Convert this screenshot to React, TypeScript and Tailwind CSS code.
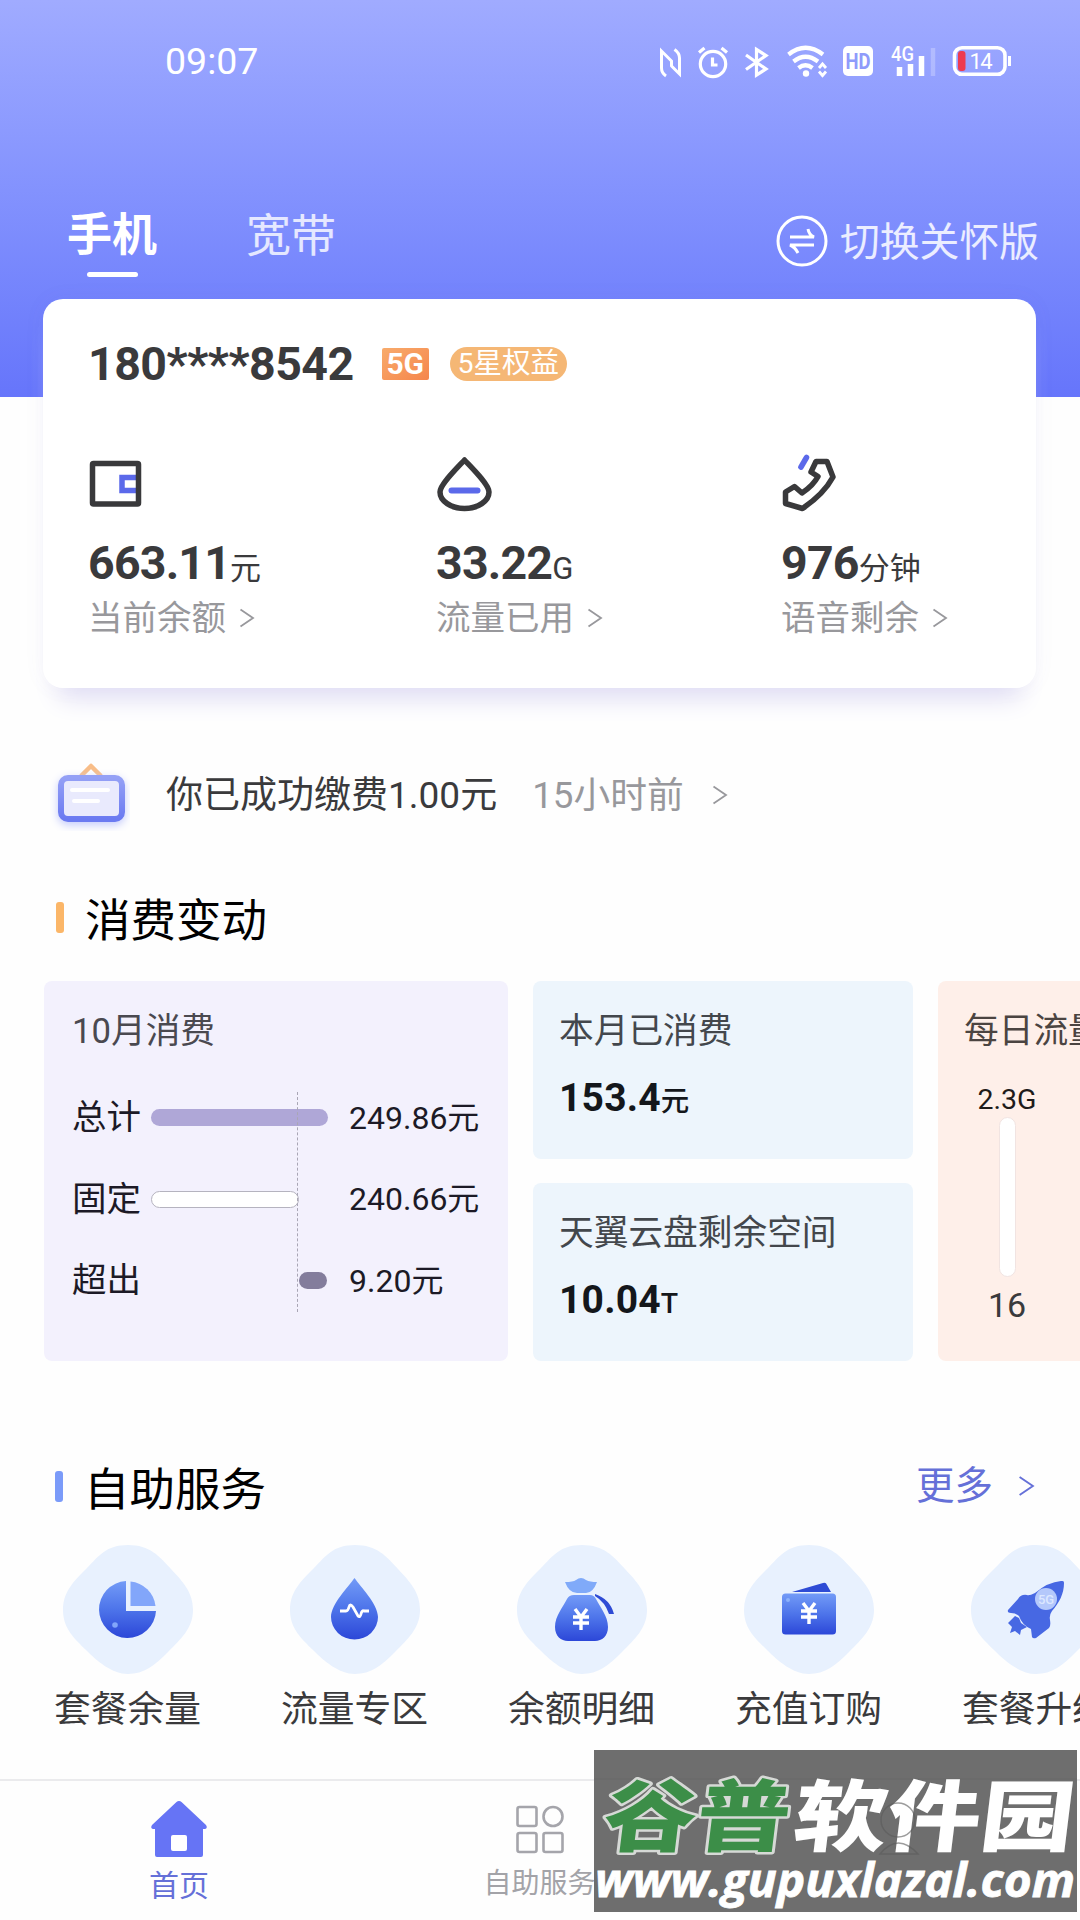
import type { ReactNode } from 'react';
import { clsx } from 'clsx';

interface Stat {
  value: string;
  unit: string;
  label: string;
  className: string;
  icon: ReactNode;
}

interface Service {
  label: string;
  icon: ReactNode;
}

function Chevron({ className }: { className: string }) {
  return (
    <svg viewBox="0 0 16 20" fill="none" stroke="currentColor" className={className}>
      <path d="M1.5 1.5 14 10 1.5 18.5" strokeWidth="1.8" />
    </svg>
  );
}

function StatusBar() {
  return (
    <div className="flex h-[122px] items-center justify-between pr-[68px] pl-[165px]">
      <span className="text-[37.500px] leading-[44px]">09:07</span>
      <svg width="354" height="36" viewBox="658 43 354 36" fill="none" stroke="#fff" strokeWidth="3.200">
        {/* NFC */}
        <path d="M666 76q-4.500-3-4.500-8V51l10 10v5M674.500 49.500q5 3.500 5 8.500V74l-8.500-8.500" strokeWidth="3" />
        {/* alarm */}
        <circle cx="713" cy="64" r="12.700" />
        <path d="M712.500 57.500V65h5M699 52.500l5.500-4.500M727 52.500l-5.500-4.500" />
        {/* bluetooth */}
        <path d="m746 55 20 14-9.500 6V49.500l9.500 6-20 14" />
        {/* wifi */}
        <path d="M788.500 54.500q17-13.500 34.500 0M793.500 61.500q12-9.500 24.500 0M798.500 68q7-5.500 14 0" strokeWidth="4.200" />
        <circle cx="806" cy="73.500" r="3.200" fill="#fff" stroke="none" />
        <path d="m819 68 3.500-4 3.500 4M819 71.500l3.500 4 3.500-4" strokeWidth="2.800" />
        {/* HD */}
        <rect x="843" y="46" width="30" height="30" rx="5" fill="#fff" stroke="none" />
        <text x="858" y="69" textAnchor="middle" stroke="none" fill="#8f9bfb" className="font-[Roboto] text-[22px] font-bold" textLength="25" lengthAdjust="spacingAndGlyphs">
          HD
        </text>
        {/* signal */}
        <text x="891" y="61" stroke="none" fill="#fff" className="font-[Roboto] text-[21px] font-medium" textLength="23" lengthAdjust="spacingAndGlyphs">
          4G
        </text>
        <path d="M899.500 67v9M910.500 64v12M921.500 56v20" strokeWidth="5.500" />
        <path d="M933 48v28" strokeWidth="4.500" opacity=".25" />
        {/* battery */}
        <rect x="954.500" y="47.700" width="50.500" height="26.600" rx="7.500" strokeWidth="3.600" />
        <path d="M1009.500 56v10" strokeWidth="3" />
        <rect x="958" y="51" width="7.500" height="20" rx="3" fill="#ee3a50" stroke="none" />
        <text x="969.500" y="68.500" stroke="none" fill="#fff" className="font-[Roboto] text-[22px]" textLength="23">
          14
        </text>
      </svg>
    </div>
  );
}

function WalletIcon() {
  return (
    <svg width="56" height="60" viewBox="0 0 56 60" fill="none">
      <path d="M49 23.500H34v13h15" stroke="#5b69ea" strokeWidth="5.500" />
      <rect x="4.500" y="9.500" width="46" height="40.500" rx="1" stroke="#39393b" strokeWidth="5.500" />
    </svg>
  );
}

function DropIcon() {
  return (
    <svg width="56" height="60" viewBox="0 0 56 60" fill="none" strokeLinejoin="round">
      <path d="M28.500 6C22 13 4 30.500 4 38 4 47 15 54.500 28.500 54.500S53 47 53 38C53 30.500 35 13 28.500 6Z" stroke="#39393b" strokeWidth="5.500" />
      <path d="M15.500 36.500h26" stroke="#5b69ea" strokeWidth="6" strokeLinecap="round" />
    </svg>
  );
}

function PhoneIcon() {
  return (
    <svg width="56" height="60" viewBox="0 0 56 60" fill="none" strokeLinejoin="round">
      <path d="m20 13 5.500-9.500" stroke="#5b69ea" strokeWidth="5.500" strokeLinecap="round" />
      <path d="m30 18 5-10.500h11L52 23C45 36 34 46 21.500 54.500L4.500 49.500V38l9-5.500 7.500 6.500c6-4 12-9 16-16.500Z" stroke="#39393b" strokeWidth="5.500" />
    </svg>
  );
}

function NoticeIcon() {
  return (
    <svg width="80" height="72" viewBox="50 757 80 72" fill="none">
      <defs>
        <linearGradient id="notice" x1="0" y1="0" x2="0" y2="1">
          <stop offset="0" stopColor="#94a0f6" />
          <stop offset="1" stopColor="#6b7af1" />
        </linearGradient>
      </defs>
      <path d="m81 774 10-10 10 10" stroke="#f8bd88" strokeWidth="4.500" strokeLinejoin="round" />
      <rect x="61" y="776" width="61" height="41" rx="7" fill="#e9eafd" stroke="url(#notice)" strokeWidth="6" className="drop-shadow-[0_3px_4px_#c3cafc]" />
      <path d="M72 788h36M74 799h24" stroke="#fff" strokeWidth="4" strokeLinecap="round" />
    </svg>
  );
}

const BLUE = 'url(#service-blue)';

function ServiceIcon({ children }: { children: ReactNode }) {
  return (
    <svg viewBox="0 0 130 130" fill="none" className="h-[130px] w-[130px]">
      <path
        d="M65 0C87 0 96 11 108 24s22 23 22 41-12 29-25 42-24 22-40 22-31-13-42-24S0 84 0 65s12-30 24-42S43 0 65 0Z"
        fill="#e8f1fe"
      />
      {children}
    </svg>
  );
}

function Yen({ x, y }: { x: number; y: number }) {
  return (
    <path
      transform={`translate(${x} ${y})`}
      d="m-6-10 6 8 6-8M0-2v13M-8-2H8M-8 4H8"
      stroke="#fff"
      strokeWidth="3.400"
    />
  );
}

const stats: Stat[] = [
  { value: '663.11', unit: '元', label: '当前余额', className: 'w-[348px]', icon: <WalletIcon /> },
  { value: '33.22', unit: 'G', label: '流量已用', className: 'w-[345px]', icon: <DropIcon /> },
  { value: '976', unit: '分钟', label: '语音剩余', className: 'w-[200px]', icon: <PhoneIcon /> },
];

const bills = [
  { label: '总计', amount: '249.86', bar: 'w-[177px] bg-[#afa7d7]' },
  { label: '固定', amount: '240.66', bar: 'w-[148px] border border-[#b5b3bf] bg-white' },
  { label: '超出', amount: '9.20', bar: 'ml-[148px] w-[28px] bg-[#837d9c]' },
];

const summaries = [
  { title: '本月已消费', value: '153.4', unit: '元' },
  { title: '天翼云盘剩余空间', value: '10.04', unit: 'T' },
];

const services: Service[] = [
  {
    label: '套餐余量',
    icon: (
      <>
        <path d="M63 36A28.500 28.500 0 1 0 93 66H63Z" fill={BLUE} />
        <path d="M67.500 36.500A28 28 0 0 1 92.500 61h-25Z" fill="#82a6fa" />
        <circle cx="52" cy="80" r="2.800" fill="#82a6fa" />
      </>
    ),
  },
  {
    label: '流量专区',
    icon: (
      <>
        <path d="M64.500 33C70 41 88 59 88 72a23 22 0 0 1-47 0C41 59 59 41 64.500 33Z" fill={BLUE} />
        <path d="M50 66h6q2 0 3-4t4 0l5 9q2 2 3-2t3-3h5" stroke="#fff" strokeWidth="2.800" />
      </>
    ),
  },
  {
    label: '余额明细',
    icon: (
      <>
        <path d="M48 37q8 0 11-2 5-4 10 0 4 2 11 2-4 11-11 11h-9q-8 0-12-11Z" fill="#80aaf9" />
        <path d="M78 49q15 5 19 20h-5q-4-12-14-18Z" fill="#2e4bd5" />
        <path d="M57 50h16q4 0 6 4c4 8 12 17 12 28 0 9-6 14-13 14H51c-7 0-13-5-13-14 0-11 8-20 12-28q2-4 7-4Z" fill={BLUE} />
        <Yen x={64} y={74} />
      </>
    ),
  },
  {
    label: '充值订购',
    icon: (
      <>
        <path d="m48 47 31-9q3-1 4 2l4 7Z" fill="#2e4bd5" />
        <rect x="38" y="48.500" width="54" height="41" rx="3.500" fill={BLUE} />
        <circle cx="44" cy="55" r="2" fill="#8cb2fb" />
        <Yen x={65} y={68} />
      </>
    ),
  },
  {
    label: '套餐升级',
    icon: (
      <>
        <path d="M90 36q-13 1-26 12-6 3-8 2-6-1-9 4l-10 11q-1 3 3 3 5 0 8 3 3 9 12 13l1 8q1 2 4 1l13-10q2-2 1-8-1-5 2-9c7-8 12-17 12-28 0-2-1-2-3-2Z" fill="#4768e3" />
        <path d="m44 71-7 7 4 4-2 6 5-2 5 4 1-5 6-3-6-4-2-5Z" fill="#4768e3" />
        <circle cx="75" cy="54" r="11" fill="#b4c8fb" />
        <text x="75" y="58.500" textAnchor="middle" fill="#dce7ff" className="font-[Roboto] text-[13px] font-medium">
          5G
        </text>
      </>
    ),
  },
];

function SectionTitle({ children, bar }: { children: ReactNode; bar: string }) {
  return (
    <div className="flex items-center">
      <span className={clsx('h-[31px] w-2 rounded-[3px]', bar)} />
      <h2 className="mt-[5px] -mb-[5px] ml-[21px] text-[45.500px] leading-[52px] text-black">{children}</h2>
    </div>
  );
}

function Watermark() {
  return (
    <svg width="483" height="162" viewBox="594 1750 483 162" className="absolute top-[1750px] left-[594px]">
      <rect x="594" y="1750" width="483" height="162" fill="#6e6e6e" />
      <path d="M594 1779h483" stroke="#696969" />
      <g transform="translate(221 1845) skewX(-7)" fontFamily='"Noto Sans CJK SC", sans-serif' fontWeight="900" fontSize="78" strokeLinejoin="round">
        <text x="380" y="0" textLength="186" lengthAdjust="spacingAndGlyphs" fill="#3c8e48" stroke="#d6d9d6" strokeWidth="5" paintOrder="stroke">
          谷普
        </text>
        <text x="570" y="0" textLength="280" lengthAdjust="spacingAndGlyphs" fill="#fff">
          软件园
        </text>
      </g>
      <g fill="none" stroke="#5b5b5b" strokeWidth="1.500" opacity=".6">
        <circle cx="898" cy="1820" r="17" />
        <path d="M880 1854q18-22 38 0Z" />
      </g>
      <text x="595" y="1897" textLength="480" lengthAdjust="spacingAndGlyphs" fill="#fff" stroke="#fff" strokeWidth=".8" fontFamily='"Open Sans", sans-serif' fontWeight="700" fontStyle="italic" fontSize="47">
        www.gupuxlazal.com
      </text>
    </svg>
  );
}

export default function App() {
  return (
    <div className="relative flex h-[1920px] w-[1080px] flex-col overflow-hidden bg-[#fefefe] font-[Roboto,'Noto_Sans_CJK_SC',sans-serif] text-[#3a3a3c]">
      <svg width="0" height="0" className="absolute">
        <linearGradient id="service-blue" x1="0" y1="0" x2="0" y2="1">
          <stop offset="0" stopColor="#739bf7" />
          <stop offset=".5" stopColor="#4d74ea" />
          <stop offset="1" stopColor="#2c47d8" />
        </linearGradient>
      </svg>

      <header className="h-[397px] shrink-0 bg-linear-to-b from-[#a0abff] to-[#6675fb] text-white">
        <StatusBar />
        <div className="flex items-start justify-between pt-[88px] pr-[41px] pl-[67px]">
          <div className="flex gap-[89px] text-[45px] leading-[52px]">
            <div className="flex flex-col items-center">
              <span className="font-bold">手机</span>
              <span className="mt-[10px] h-[5px] w-[51px] rounded-full bg-white" />
            </div>
            <span className="pt-px text-white/80">宽带</span>
          </div>
          <div className="mt-[3px] flex items-center gap-[12px]">
            <svg width="52" height="52" viewBox="0 0 52 52" fill="none" stroke="#fff" strokeWidth="3">
              <circle cx="26" cy="26" r="24" />
              <path d="M14 22h24q-5-2-6-8M38 30H14q5 2 8 8" />
            </svg>
            <span className="mt-[4px] text-[39.800px] leading-[52px] text-white/85">切换关怀版</span>
          </div>
        </div>
      </header>

      {/* Account card */}
      <section className="-mt-[98px] mr-[44px] ml-[43px] h-[389px] shrink-0 rounded-[20px] bg-white px-[45px] pt-[38px] shadow-[0_26px_26px_-16px_#dfdcf4,0_0_22px_#6e6eb40d]">
        <div className="flex h-[54px] items-center">
          <span className="text-[46.500px] leading-[54px] font-bold tracking-[-0.5px]">180****8542</span>
          <span className="ml-[28px] flex h-8 w-[47px] items-center justify-center rounded-xs bg-linear-to-br from-[#f8ab6c] to-[#f5854b] text-[30px] leading-8 font-bold text-white">
            5G
          </span>
          <span className="ml-[21px] flex h-[34px] w-[117px] items-center justify-center rounded-full bg-[#f5b775] text-[28.500px] leading-[36px] text-white">
            5星权益
          </span>
        </div>
        <div className="mt-[63px] flex">
          {stats.map((stat) => (
            <div key={stat.label} className={stat.className}>
              {stat.icon}
              <p className="mt-[21px] flex items-baseline leading-[56px]">
                <span className="text-[46.500px] font-bold tracking-[-0.8px]">{stat.value}</span>
                <span className="text-[31px]">{stat.unit}</span>
              </p>
              <p className="-mt-[5px] flex items-center text-[34.500px] leading-[52px] text-[#98989c]">
                {stat.label}
                <Chevron className="ml-[13px] h-[20px] w-4" />
              </p>
            </div>
          ))}
        </div>
      </section>

      {/* Latest notice */}
      <section className="mt-[69px] flex h-[76px] shrink-0 items-center pl-[50px]">
        <NoticeIcon />
        <p className="mt-[2px] ml-[36px] text-[37px]">你已成功缴费1.00元</p>
        <p className="mt-[2px] ml-[35px] text-[36.800px] text-[#98989c]">15小时前</p>
        <Chevron className="ml-[28px] h-[20px] w-4 text-[#98989c]" />
      </section>

      <section className="mt-[58px] shrink-0">
        <div className="pl-[56px]">
          <SectionTitle bar="bg-[#fbb668]">消费变动</SectionTitle>
        </div>
        <div className="mt-[38px] flex h-[380px] gap-[25px] pl-[44px]">
          <div className="relative h-full w-[464px] shrink-0 rounded-lg bg-[#f3f1fd] px-[28px] pt-[24px]">
            <h3 className="text-[34.700px] leading-[52px] text-[#4a4950]">10月消费</h3>
            <div className="mt-[20px]">
              {bills.map((bill) => (
                <div key={bill.label} className="flex h-[81.500px] items-center text-[#1c1a26]">
                  <span className="w-[79px] pt-px text-[34.500px]">{bill.label}</span>
                  <div className="w-[198px]">
                    <div className={clsx('h-[17px] rounded-full', bill.bar)} />
                  </div>
                  <span className="text-[32px]">{bill.amount}元</span>
                </div>
              ))}
            </div>
            <div className="absolute top-[111px] left-[253px] h-[220px] border-l border-dashed border-[#a9a6b5]" />
          </div>

          <div className="flex w-[380px] shrink-0 flex-col gap-[24px]">
            {summaries.map((item) => (
              <div key={item.title} className="flex-1 rounded-lg bg-[#edf5fc] px-[26px] pt-[24px]">
                <h3 className="text-[34.700px] leading-[52px] text-[#43474c]">{item.title}</h3>
                <p className="mt-[13px] flex items-baseline leading-[56px] text-[#14171b]">
                  <span className="text-[39px] font-bold tracking-[0.200px]">{item.value}</span>
                  <span className="text-[28.500px] font-medium">{item.unit}</span>
                </p>
              </div>
            ))}
          </div>

          <div className="w-[300px] shrink-0 rounded-lg bg-[#feefe9] px-[26px] pt-[24px]">
            <h3 className="text-[34.700px] leading-[52px] whitespace-nowrap text-[#4b4441]">每日流量</h3>
            <div className="mt-[26px] flex w-[86px] flex-col items-center">
              <span className="text-[28.500px] leading-[34px] text-[#1f1b1a]">2.3G</span>
              <span className="h-[160px] w-[17px] rounded-full border border-[#f1e4e2] bg-white" />
              <span className="mt-[8px] text-[34px] leading-[40px]">16</span>
            </div>
          </div>
        </div>
      </section>

      <section className="mt-[99px] shrink-0">
        <div className="flex items-center justify-between pr-[45px] pl-[55px]">
          <SectionTitle bar="bg-[#7b9bf9]">自助服务</SectionTitle>
          <a className="flex items-center text-[38.500px] leading-[52px] text-[#6570d8]">
            更多
            <Chevron className="ml-[25px] h-6 w-[17px]" />
          </a>
        </div>
        <div className="mt-[33px] flex w-[1200px] pl-[14px]">
          {services.map((service) => (
            <div key={service.label} className="flex w-[227px] shrink-0 flex-col items-center">
              <ServiceIcon>{service.icon}</ServiceIcon>
              <span className="mt-[9px] text-[36.800px] leading-[52px]">{service.label}</span>
            </div>
          ))}
        </div>
      </section>

      <nav className="absolute bottom-0 left-0 flex h-[141px] w-full border-t-2 border-[#ebebed] bg-[#fefefe]">
        <div className="flex w-[358px] flex-col items-center pt-[18px]">
          <svg width="58" height="60" viewBox="0 0 58 60">
            <path d="M29 2q1.500 0 2.500 1L56 26q2 3-1 4h-2v26q0 2-2 2H7q-2 0-2-2V30H3q-3-1-1-4L26.500 3q1-1 2.500-1Z" fill="#6674f5" />
            <rect x="21" y="36" width="16" height="16" rx="2" fill="#fff" />
          </svg>
          <span className="mt-[7px] text-[30px] leading-[40px] text-[#6570d8]">首页</span>
        </div>
        <div className="flex w-[363px] flex-col items-center pt-[24px]">
          <svg width="48" height="50" viewBox="0 0 48 50" fill="none" stroke="#a5a5ab" strokeWidth="2.600">
            <rect x="1.500" y="2" width="19" height="19" rx="2" />
            <circle cx="37" cy="11.500" r="9.500" />
            <rect x="1.500" y="28" width="19" height="19" rx="2" />
            <rect x="27.500" y="28" width="19" height="19" rx="2" />
          </svg>
          <span className="mt-[9px] text-[28px] leading-[40px] text-[#a3a3a8]">自助服务</span>
        </div>
      </nav>

      <Watermark />
    </div>
  );
}
